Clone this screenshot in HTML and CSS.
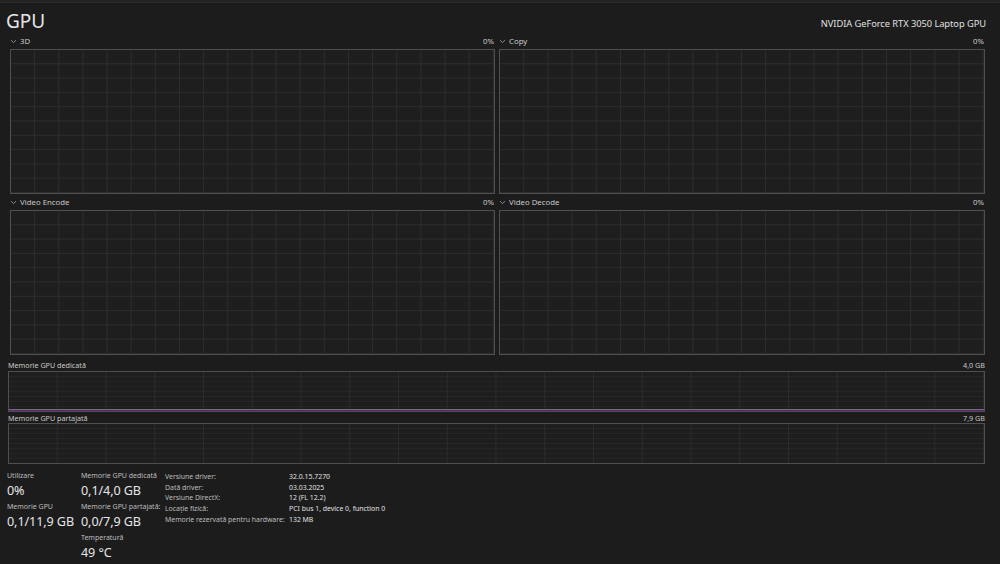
FILE: index.html
```html
<!DOCTYPE html>
<html lang="ro">
<head>
    <meta charset="UTF-8">
    <title>GPU</title>
    <link rel="stylesheet" href="styles.css">
</head>
<body>
    <div class="topbar"></div>
    <div class="header">
        <h1>GPU</h1>
        <span class="gpu-name">NVIDIA GeForce RTX 3050 Laptop GPU</span>
    </div>

    <!-- Engine graphs -->
    <div class="charts">
        <div class="chart">
            <div class="chart-label">
                <span><svg class="chev" width="7" height="5" viewBox="0 0 7 5"><path d="M1 1.2 L3.5 3.6 L6 1.2" fill="none" stroke="#8a8a8a" stroke-width="1"/></svg>3D</span>
                <span>0%</span>
            </div>
            <div class="graph"></div>
        </div>
        <div class="chart">
            <div class="chart-label">
                <span><svg class="chev" width="7" height="5" viewBox="0 0 7 5"><path d="M1 1.2 L3.5 3.6 L6 1.2" fill="none" stroke="#8a8a8a" stroke-width="1"/></svg>Copy</span>
                <span>0%</span>
            </div>
            <div class="graph"></div>
        </div>
        <div class="chart">
            <div class="chart-label">
                <span><svg class="chev" width="7" height="5" viewBox="0 0 7 5"><path d="M1 1.2 L3.5 3.6 L6 1.2" fill="none" stroke="#8a8a8a" stroke-width="1"/></svg>Video Encode</span>
                <span>0%</span>
            </div>
            <div class="graph"></div>
        </div>
        <div class="chart">
            <div class="chart-label">
                <span><svg class="chev" width="7" height="5" viewBox="0 0 7 5"><path d="M1 1.2 L3.5 3.6 L6 1.2" fill="none" stroke="#8a8a8a" stroke-width="1"/></svg>Video Decode</span>
                <span>0%</span>
            </div>
            <div class="graph"></div>
        </div>
    </div>

    <!-- Memory graphs -->
    <div class="memory">
        <div class="mem-label first">
            <span>Memorie GPU dedicată</span>
            <span>4,0 GB</span>
        </div>
        <div class="mem-graph">
            <div class="mem-line"></div>
        </div>
        <div class="mem-label">
            <span>Memorie GPU partajată</span>
            <span>7,9 GB</span>
        </div>
        <div class="mem-graph"></div>
    </div>

    <!-- Stats -->
    <div class="stats">
        <div class="stat-col col-a">
            <div class="stat">
                <div class="stat-name">Utilizare</div>
                <div class="stat-value">0%</div>
            </div>
            <div class="stat">
                <div class="stat-name">Memorie GPU</div>
                <div class="stat-value">0,1/11,9 GB</div>
            </div>
        </div>
        <div class="stat-col col-b">
            <div class="stat">
                <div class="stat-name">Memorie GPU dedicată</div>
                <div class="stat-value">0,1/4,0 GB</div>
            </div>
            <div class="stat">
                <div class="stat-name">Memorie GPU partajată:</div>
                <div class="stat-value">0,0/7,9 GB</div>
            </div>
            <div class="stat">
                <div class="stat-name">Temperatură</div>
                <div class="stat-value">49 °C</div>
            </div>
        </div>
        <div class="props">
            <span class="prop-name">Versiune driver:</span><span class="prop-value">32.0.15.7270</span>
            <span class="prop-name">Dată driver:</span><span class="prop-value">03.03.2025</span>
            <span class="prop-name">Versiune DirectX:</span><span class="prop-value">12 (FL 12.2)</span>
            <span class="prop-name">Locație fizică:</span><span class="prop-value">PCI bus 1, device 0, function 0</span>
            <span class="prop-name">Memorie rezervată pentru hardware:</span><span class="prop-value">132 MB</span>
        </div>
    </div>
</body>
</html>
```

FILE: styles.css
```css
body {
    margin: 0;
    background: #1c1c1c;
    color: #d6d6d6;
    font-family: "Noto Sans", "Open Sans", sans-serif;
    width: 1000px;
    height: 564px;
    overflow: hidden;
}
.topbar {
    height: 2px;
    background: #232323;
    border-bottom: 1px solid #2c2c2c;
}
.header {
    display: flex;
    justify-content: space-between;
    align-items: flex-end;
    height: 30px;
    padding: 0 14px 0 6px;
}
.header h1 {
    margin: 0;
    font-size: 19px;
    font-weight: 400;
    line-height: 24px;
    color: #e6e6e6;
}
.gpu-name {
    font-size: 9.3px;
    letter-spacing: -0.05px;
    line-height: 18px;
    color: #e0e0e0;
    white-space: nowrap;
}
.charts {
    display: grid;
    grid-template-columns: 485px 486px;
    column-gap: 4px;
    padding: 0 0 0 10px;
}
.chart-label {
    display: flex;
    justify-content: space-between;
    align-items: center;
    height: 16px;
    font-size: 7.8px;
    color: #c8c8c8;
    padding: 0 1px 0 0;
    white-space: nowrap;
}
.chev {
    margin: 0 3px 0 0;
    vertical-align: 0;
}
.graph {
    height: 143px;
    border: 1px solid #4f4f4f;
    background-color: #1e1e1e;
    background-image:
        linear-gradient(to right, #2d2d2d 1px, transparent 1px),
        linear-gradient(to bottom, #2d2d2d 1px, transparent 1px);
    background-size: calc(100% / 20) calc(100% / 10);
    background-position: -1px -1px;
}
.memory {
    padding: 0 15px 0 8px;
}
.mem-label {
    display: flex;
    justify-content: space-between;
    align-items: center;
    height: 11px;
    font-size: 7.2px;
    color: #c8c8c8;
    white-space: nowrap;
}
.mem-label.first {
    margin-top: 3px;
    height: 13px;
}
.mem-graph {
    height: 39px;
    border: 1px solid #4f4f4f;
    background-color: #1e1e1e;
    background-image:
        linear-gradient(to right, #2b2b2b 1px, transparent 1px),
        linear-gradient(to bottom, #252525 1px, transparent 1px);
    background-size: calc(100% / 20) 5px;
    background-position: -1px -1px;
    display: flex;
    flex-direction: column;
    justify-content: flex-end;
}
.mem-line {
    height: 1px;
    background: #8a5aa3;
    margin-bottom: 1px;
    box-shadow: 0 1px 0 #4a3355;
}
.stats {
    display: flex;
    padding: 6px 0 0 7px;
}
.stat-col {
    display: flex;
    flex-direction: column;
}
.col-a {
    width: 74px;
}
.col-b {
    width: 84px;
}
.stat {
    height: 31px;
}
.stat-name {
    font-size: 7px;
    line-height: 12px;
    color: #bdbdbd;
    white-space: nowrap;
}
.stat-value {
    font-size: 12.6px;
    letter-spacing: -0.1px;
    line-height: 17px;
    color: #e6e6e6;
    white-space: nowrap;
}
.props {
    display: grid;
    grid-template-columns: 124px auto;
    align-content: start;
    font-size: 6.9px;
    line-height: 10.7px;
    color: #bdbdbd;
    white-space: nowrap;
    padding-top: 2px;
}
.prop-value {
    color: #e0e0e0;
}
```
